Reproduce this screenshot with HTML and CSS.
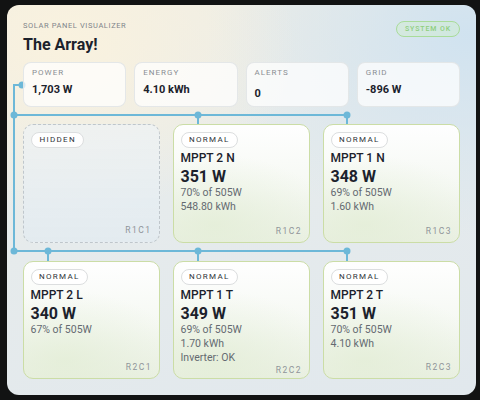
FILE: index.html
```html
<!DOCTYPE html>
<html>
<head>
<meta charset="utf-8">
<link rel="stylesheet" href="styles.css">
</head>
<body>
<div class="panel">
  <svg class="wires" width="469" height="390" viewBox="0 0 469 390">
    <g fill="none" stroke="#6db8d8" stroke-width="2">
      <path d="M15 80 H7 V246"/>
      <path d="M7 110 H340"/>
      <path d="M191 110 V119"/>
      <path d="M340 110 V119"/>
      <path d="M7 246 H340"/>
      <path d="M41 246 V256"/>
      <path d="M191 246 V256"/>
      <path d="M340 246 V256"/>
    </g>
    <g fill="#6db8d8">
      <circle cx="15" cy="80" r="3.5"/>
      <circle cx="7" cy="110" r="3.5"/>
      <circle cx="191" cy="110" r="3.5"/>
      <circle cx="340" cy="110" r="3.5"/>
      <circle cx="7" cy="246" r="3.5"/>
      <circle cx="41" cy="246" r="3.5"/>
      <circle cx="191" cy="246" r="3.5"/>
      <circle cx="340" cy="246" r="3.5"/>
    </g>
  </svg>
  <div class="content">
    <header class="header">
      <div class="titles">
        <div class="eyebrow">SOLAR PANEL VISUALIZER</div>
        <h1 class="title">The Array!</h1>
      </div>
      <div class="status">SYSTEM OK</div>
    </header>
    <div class="stats">
      <div class="stat"><div class="stat-label">POWER</div><div class="stat-value">1,703 W</div></div>
      <div class="stat"><div class="stat-label">ENERGY</div><div class="stat-value">4.10 kWh</div></div>
      <div class="stat"><div class="stat-label">ALERTS</div><div class="stat-value stat-value-low">0</div></div>
      <div class="stat"><div class="stat-label">GRID</div><div class="stat-value">-896 W</div></div>
    </div>
    <div class="grid">
      <div class="card card-hidden">
        <span class="badge">HIDDEN</span>
        <span class="pos">R1C1</span>
      </div>
      <div class="card">
        <span class="badge">NORMAL</span>
        <div class="name">MPPT 2 N</div>
        <div class="watts">351 W</div>
        <div class="meta">70% of 505W</div>
        <div class="meta">548.80 kWh</div>
        <span class="pos">R1C2</span>
      </div>
      <div class="card">
        <span class="badge">NORMAL</span>
        <div class="name">MPPT 1 N</div>
        <div class="watts">348 W</div>
        <div class="meta">69% of 505W</div>
        <div class="meta">1.60 kWh</div>
        <span class="pos">R1C3</span>
      </div>
      <div class="card">
        <span class="badge">NORMAL</span>
        <div class="name">MPPT 2 L</div>
        <div class="watts">340 W</div>
        <div class="meta">67% of 505W</div>
        <span class="pos">R2C1</span>
      </div>
      <div class="card">
        <span class="badge">NORMAL</span>
        <div class="name">MPPT 1 T</div>
        <div class="watts">349 W</div>
        <div class="meta">69% of 505W</div>
        <div class="meta">1.70 kWh</div>
        <div class="meta">Inverter: OK</div>
        <span class="pos">R2C2</span>
      </div>
      <div class="card">
        <span class="badge">NORMAL</span>
        <div class="name">MPPT 2 T</div>
        <div class="watts">351 W</div>
        <div class="meta">70% of 505W</div>
        <div class="meta">4.10 kWh</div>
        <span class="pos">R2C3</span>
      </div>
    </div>
  </div>
</div>
</body>
</html>
```

FILE: styles.css
```css
* { box-sizing: border-box; }
html, body { margin: 0; padding: 0; }
body {
  background: #121313;
  font-family: Roboto, "Liberation Sans", sans-serif;
  width: 480px;
  height: 400px;
  overflow: hidden;
}
.panel {
  position: relative;
  margin: 5px 4px 5px 7px;
  width: 469px;
  height: 390px;
  border-radius: 12px;
  padding: 16px;
  background:
    radial-gradient(ellipse 230px 170px at 60px 40px, rgba(250,242,222,0.95), rgba(250,242,222,0) 100%),
    radial-gradient(ellipse 260px 200px at 460px 30px, rgba(207,226,240,0.95), rgba(207,226,240,0) 100%),
    linear-gradient(160deg, #f1eee3 0%, #e6ebec 45%, #e1e8ed 100%);
  overflow: hidden;
}
.wires {
  position: absolute;
  left: 0;
  top: 0;
  z-index: 0;
}
.content {
  position: relative;
  z-index: 1;
  display: flex;
  flex-direction: column;
}
.header {
  display: flex;
  justify-content: space-between;
  align-items: flex-start;
}
.eyebrow {
  font-size: 7.5px;
  line-height: 10px;
  letter-spacing: 0.6px;
  color: #80848a;
  font-weight: 400;
}
.title {
  margin: 4px 0 0 0;
  font-size: 16px;
  line-height: 20px;
  font-weight: 700;
  color: #1c222c;
}
.status {
  height: 16px;
  padding: 0 8px;
  border: 1.5px solid #a9dc9a;
  border-radius: 999px;
  background: rgba(205,240,195,0.35);
  color: #8fcf80;
  font-size: 7px;
  line-height: 13px;
  font-weight: 500;
  letter-spacing: 0.9px;
  display: flex;
  align-items: center;
}
.stats {
  margin-top: 7px;
  display: grid;
  grid-template-columns: repeat(4, 1fr);
  gap: 8px;
}
.stat {
  height: 45px;
  padding: 4px 8px 0 8px;
  border: 1px solid rgba(225,228,230,0.9);
  border-radius: 8px;
  background: rgba(255,255,255,0.72);
}
.stat-label {
  font-size: 8px;
  line-height: 12px;
  letter-spacing: 1px;
  color: #8a8e93;
  font-weight: 400;
}
.stat-value {
  margin-top: 4px;
  font-size: 11px;
  line-height: 14px;
  font-weight: 700;
  color: #1c222c;
}
.stat-value-low { margin-top: 8px; }
.grid {
  margin-top: 17px;
  display: grid;
  grid-template-columns: repeat(3, 137px);
  grid-template-rows: 119px 118px;
  column-gap: 13px;
  row-gap: 18px;
}
.card {
  display: flex;
  flex-direction: column;
  align-items: flex-start;
  padding: 6.5px 7px 5.5px 6.5px;
  border: 1.5px solid #cbdda6;
  border-radius: 10px;
  background:
    radial-gradient(ellipse 120px 70px at 30% 85%, rgba(226,237,212,0.7), rgba(226,237,212,0) 100%),
    linear-gradient(180deg, rgba(255,255,255,0.97) 0%, rgba(246,249,243,0.95) 55%, #eaf0e3 100%);
}
.card-hidden {
  border: 1px dashed #bfc6cb;
  padding: 7px 7.5px 6px 7px;
  background: linear-gradient(180deg, rgba(238,243,246,0.7), rgba(226,235,241,0.75));
}
.badge {
  height: 16px;
  padding: 0 7.5px;
  border: 1px solid #dcdedf;
  border-radius: 999px;
  background: rgba(255,255,255,0.9);
  font-size: 8px;
  line-height: 14px;
  letter-spacing: 1.3px;
  font-weight: 400;
  color: #2f3338;
}
.name {
  margin-top: 3px;
  font-size: 12px;
  line-height: 15px;
  font-weight: 500;
  color: #1c222c;
}
.watts {
  margin-top: 1px;
  font-size: 16px;
  line-height: 19px;
  font-weight: 700;
  color: #1c222c;
}
.meta {
  font-size: 10.5px;
  line-height: 14px;
  color: #646a71;
}
.pos {
  margin-top: auto;
  align-self: flex-end;
  font-size: 8.5px;
  line-height: 11px;
  letter-spacing: 1.5px;
  color: #8f9499;
}
```
